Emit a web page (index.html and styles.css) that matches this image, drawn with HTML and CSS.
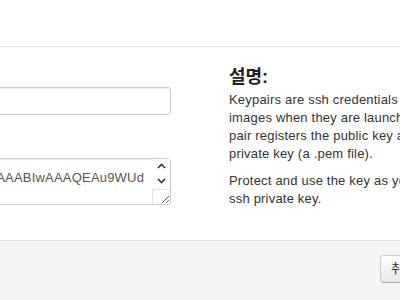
FILE: index.html
```html
<!DOCTYPE html>
<html lang="ko">

<head>
    <meta charset="UTF-8">
    <title>키 쌍 가져오기</title>
    <link rel="stylesheet" href="styles.css">
</head>

<body>
    <div class="modal">
        <div class="modal-header">
            <span class="close">&times;</span>
            <h3>키 쌍 가져오기</h3>
        </div>

        <div class="modal-body">
            <div class="left">
                <div class="field">
                    <label for="name">키 쌍 이름</label>
                    <input type="text" id="name">
                </div>
                <div class="field">
                    <label for="public_key">공개 키</label>
                    <div class="area-wrap">
                        <textarea id="public_key">ssh-rsa AAAAB3NzaC1yc2EAAAABIwAAAQEAu9WUd</textarea>
                        <!-- 滚动条箭头 -->
                        <div class="scroll">
                            <svg width="9" height="6" viewBox="0 0 9 6"><path d="M1 5 L4.5 1.5 L8 5" fill="none" stroke="#333" stroke-width="1.6"/></svg>
                            <svg width="9" height="6" viewBox="0 0 9 6"><path d="M1 1 L4.5 4.5 L8 1" fill="none" stroke="#333" stroke-width="1.6"/></svg>
                        </div>
                        <span class="corner"></span>
                    </div>
                </div>
            </div>

            <div class="right">
                <h3>설명:</h3>
                <p>Keypairs are ssh credentials which are injected into images when they are launched. Creating a new key pair registers the public key and downloads the private key (a .pem file).</p>
                <p>Protect and use the key as you would any normal ssh private key.</p>
            </div>
        </div>

        <div class="modal-footer">
            <a class="btn" href="#">취소</a>
            <button class="btn btn-primary">키 쌍 가져오기</button>
        </div>
    </div>
</body>

</html>
```

FILE: styles.css
```css
* {
    margin: 0;
    padding: 0;
    box-sizing: border-box;
}

html,
body {
    overflow: hidden;
    background: #fff;
}

body {
    width: 400px;
    height: 300px;
    font: 13px/18px "Liberation Sans", "Noto Sans CJK KR", sans-serif;
    color: #333;
}

.modal {
    width: 763px;
    margin-left: -204px;
}

.modal-header {
    height: 47px;
    padding: 9px 15px 10px;
    border-bottom: 1px solid #e5e5e5;
}

.modal-header h3 {
    font-size: 18px;
    line-height: 27px;
}

.modal-header .close {
    float: right;
    font: bold 20px/27px "Liberation Sans", sans-serif;
    color: #000;
    opacity: 0.2;
}

.modal-body {
    display: flex;
    gap: 58px;
    height: 193px;
    padding: 17px 15px 0;
}

.left {
    width: 360px;
}

.field {
    margin-bottom: 20px;
}

.field label {
    display: block;
    margin-bottom: 5px;
    font-weight: bold;
}

.field input,
.field textarea {
    display: block;
    width: 100%;
    border: 1px solid #ccc;
    border-radius: 3px;
    box-shadow: inset 0 1px 1px rgba(0, 0, 0, 0.075);
    color: #555;
    font: 13px/18px "Liberation Sans", sans-serif;
    letter-spacing: 0.2px;
    outline: none;
}

.field input {
    height: 28px;
    padding: 4px 6px;
}

.area-wrap {
    position: relative;
}

.field textarea {
    height: 47px;
    padding: 10px 24px 4px 6px;
    overflow: hidden;
    white-space: pre;
}

.area-wrap .scroll {
    position: absolute;
    top: 1px;
    right: 1px;
    width: 17px;
    height: 30px;
    padding-top: 4px;
    display: flex;
    flex-direction: column;
    align-items: center;
    gap: 9px;
    background: #fff;
    pointer-events: none;
}

.area-wrap .corner {
    position: absolute;
    right: 1px;
    bottom: 1px;
    width: 18px;
    height: 15px;
    border-left: 1px solid #e3e3e3;
    border-top: 1px solid #e3e3e3;
    pointer-events: none;
}

.right {
    width: 315px;
}

.right h3 {
    font: bold 18px/27px "Liberation Sans", "Noto Sans CJK KR", sans-serif;
    color: #222;
}

.right p {
    margin-bottom: 9px;
    letter-spacing: 0.2px;
}

.modal-footer {
    display: flex;
    justify-content: flex-end;
    gap: 17px;
    height: 60px;
    padding: 14px 15px 15px;
    background: #f5f5f5;
    border-top: 1px solid #ddd;
    box-shadow: inset 0 1px 0 #fff;
}

.btn {
    display: inline-block;
    height: 28px;
    padding: 4px 10px;
    font: 13px/18px "Liberation Sans", "Noto Sans CJK KR", sans-serif;
    color: #333;
    text-decoration: none;
    background: linear-gradient(#fff, #e6e6e6);
    border: 1px solid #ccc;
    border-bottom-color: #b3b3b3;
    border-radius: 4px;
    box-shadow: inset 0 1px 0 rgba(255, 255, 255, 0.2), 0 1px 2px rgba(0, 0, 0, 0.05);
    cursor: pointer;
}

.btn-primary {
    color: #fff;
    background: linear-gradient(#08c, #04c);
    border-color: #04c #04c #002a80;
}
```
